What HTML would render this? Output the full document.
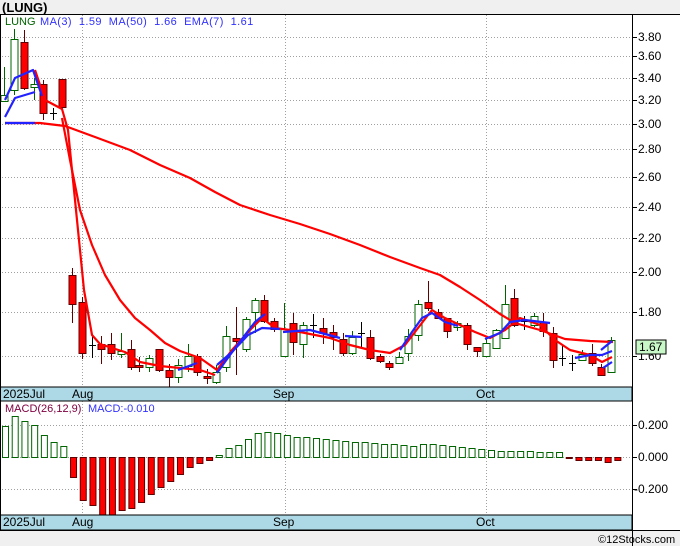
<!DOCTYPE html>
<html><head><meta charset="utf-8"><style>
body{margin:0;width:680px;height:546px;background:#f0f0f0;overflow:hidden;font-family:"Liberation Sans",sans-serif}
svg{position:absolute;left:0;top:0}
text{font-family:"Liberation Sans",sans-serif}
</style></head><body>
<svg id="s" width="680" height="546" xmlns="http://www.w3.org/2000/svg">
<rect x="0" y="0" width="680" height="546" fill="#f0f0f0"/>
<rect x="0" y="14" width="680" height="516" fill="#fff"/>
<text x="2" y="12" font-size="13" font-weight="bold" fill="#000">(LUNG)</text>
<g id="grid" stroke="#a0a0a0" stroke-dasharray="1,2" stroke-width="1"></g>
<g id="c"></g>
<g id="lines" fill="none" stroke-width="2.2" stroke-linejoin="round"></g>
<rect x="0" y="387" width="632" height="14" fill="#add8e6" stroke="#000"/>
<rect x="0" y="515" width="632" height="15" fill="#add8e6" stroke="#000"/>
<line x1="0.5" y1="14" x2="0.5" y2="530" stroke="#000"/>
<line x1="0" y1="14.5" x2="680" y2="14.5" stroke="#000"/>
<line x1="632.5" y1="14" x2="632.5" y2="546" stroke="#000"/>
<line x1="0" y1="530.5" x2="680" y2="530.5" stroke="#000"/>
<g font-size="12" fill="#000">
<text x="3" y="398">2025Jul</text><text x="72" y="398">Aug</text><text x="273" y="398">Sep</text><text x="476" y="398">Oct</text>
<text x="3" y="526">2025Jul</text><text x="72" y="526">Aug</text><text x="273" y="526">Sep</text><text x="476" y="526">Oct</text>
</g>
<text x="5" y="25" font-size="11" fill="#006400">LUNG</text>
<text x="40" y="25" font-size="11" fill="#3030ff" letter-spacing="0.4" xml:space="preserve">MA(3)  1.59  MA(50)  1.66  EMA(7)  1.61</text>
<text x="5" y="412" font-size="11" fill="#800040">MACD(26,12,9)</text>
<text x="88" y="412" font-size="11" fill="#3030ff">MACD:-0.010</text>
<g id="ax" font-size="12" fill="#000"></g>
<rect x="636" y="340" width="30" height="14" fill="#c8f7c8" stroke="#000"/>
<text x="639" y="351" font-size="12">1.67</text>
<text x="598" y="543" font-size="11" fill="#000">©12Stocks.com</text>
</svg>
<script>
var NS="http://www.w3.org/2000/svg",S=document.getElementById('s');
function el(p,t,a){var e=document.createElementNS(NS,t);for(var k in a)e.setAttribute(k,a[k]);document.getElementById(p).appendChild(e);return e}
var pr=[[37,"3.80"],[56,"3.60"],[78,"3.40"],[100,"3.20"],[124,"3.00"],[149,"2.80"],[177,"2.60"],[207,"2.40"],[238,"2.20"],[272,"2.00"],[312,"1.80"],[356,"1.60"]];
pr.forEach(function(p){el('grid','line',{x1:2,y1:p[0]+.5,x2:632,y2:p[0]+.5});el('ax','line',{x1:632,y1:p[0]+.5,x2:637,y2:p[0]+.5,stroke:'#000'});var t=el('ax','text',{x:638,y:p[0]+4});t.textContent=p[1];});
[[425,"0.200"],[457,"0.000"],[489,"-0.200"]].forEach(function(p){el('grid','line',{x1:2,y1:p[0]+.5,x2:632,y2:p[0]+.5});el('ax','line',{x1:632,y1:p[0]+.5,x2:637,y2:p[0]+.5,stroke:'#000'});var t=el('ax','text',{x:p[1][0]=='-'?634:638,y:p[0]+4});t.textContent=p[1];});
[82,285,486].forEach(function(x){el('grid','line',{x1:x+.5,y1:15,x2:x+.5,y2:387});el('grid','line',{x1:x+.5,y1:401,x2:x+.5,y2:515});});
var C=[[4,95,101,67,101,'g'],[14,39,90,29,95,'g'],[24,42,88,30,90,'r'],[34,84,87,78,100,'g'],[43,84,113,80,120,'r'],[53,113,114,108,120,'x'],[62,79,107,79,110,'r'],
[72,275,304,268,323,'r'],[82,302,353,297,359,'r'],[92,345,345,335,358,'x'],[101,344,349,336,364,'r'],[111,344,353,333,360,'r'],[121,351,354,333,358,'g'],[131,349,367,340,370,'r'],[139,365,367,357,372,'r'],[149,358,367,355,372,'g'],[159,349,370,349,372,'r'],[169,370,377,364,387,'r'],[178,365,377,359,383,'g'],[188,356,366,344,372,'g'],[197,356,372,354,376,'r'],[207,376,378,369,384,'r'],[216,372,382,365,384,'g'],[226,336,367,326,372,'g'],[236,338,341,307,375,'r'],[246,319,349,317,352,'g'],[255,300,312,298,333,'g'],[264,300,321,295,323,'r'],[274,321,329,318,332,'r'],
[284,329,356,303,356,'g'],[293,323,342,313,355,'r'],[303,325,344,322,358,'g'],[313,325,325,314,338,'x'],[323,328,333,318,344,'r'],[333,332,337,325,350,'r'],[343,339,353,333,356,'r'],[352,337,353,331,355,'g'],[361,333,333,322,347,'x'],[370,337,358,330,360,'r'],[380,356,361,354,363,'r'],[389,363,367,361,370,'r'],[399,357,363,352,364,'g'],[408,336,353,329,361,'g'],[418,304,335,300,341,'g'],[428,302,308,281,311,'r'],[438,312,318,309,319,'r'],[447,318,331,318,338,'r'],[457,323,327,321,331,'g'],[467,325,344,323,350,'r'],[477,347,351,347,357,'r'],[486,343,356,339,356,'g'],[496,330,348,329,348,'g'],[505,304,338,285,338,'g'],[514,298,325,289,327,'r'],[524,321,323,316,330,'x'],[534,316,325,313,327,'g'],[543,322,331,313,337,'r'],[553,333,360,327,368,'r'],[562,358,358,346,366,'x'],[572,363,363,355,371,'x'],[582,354,360,350,361,'g'],[592,353,363,344,366,'r'],[601,367,375,364,375,'r'],[611,340,372,337,372,'g']];
C.forEach(function(c){var col=c[5]=='g'?'#006400':c[5]=='r'?'#600000':'#000';
el('c','line',{x1:c[0]+.5,y1:c[3],x2:c[0]+.5,y2:c[4],stroke:col});
if(c[5]=='x'){el('c','line',{x1:c[0]-3,y1:c[1]+.5,x2:c[0]+4,y2:c[1]+.5,stroke:col});}
else el('c','rect',{x:c[0]-3,y:c[1]+.5,width:7,height:Math.max(1,c[2]-c[1]),fill:c[5]=='g'?'#fff':'#f00',stroke:col});});
function pl(pts,col){el('lines','polyline',{points:pts,stroke:col});}
pl("5,123 40,123 65,126 95,137 130,150 160,165 190,178 215,192 240,205 270,215 300,224 330,234 360,245 390,257 420,268 440,275 460,287 480,300 500,314 515,323 540,330 565,339 590,341 613,342","#f00");
pl("5,123 35,123","#22f");
pl("35,70 45,100 62,109 68,130 75,200 84,290 92,335 100,344 112,348 125,352 140,362 160,366 180,368 200,370 215,375","#f00");
pl("62,118 70,160 80,210 92,245 105,275 120,300 135,318 150,330 165,343 180,351 200,358 217,370 232,350 250,330 262,318 275,328 290,330 310,334 330,338 350,345 370,350 390,353 405,345 418,328 432,310 445,318 460,325 475,332 490,338 505,330 520,318 540,325 555,340 570,350 590,355 602,362 612,357","#f00");
pl("5,100 15,78 33,70 42,96","#22f");
pl("5,117 15,98 35,92","#22f");
pl("178,370 197,363","#22f");
pl("217,373 230,355 245,335 255,322 265,314","#22f");
pl("217,365 232,352 248,335 262,328 280,329","#22f");
pl("283,332 310,330 340,338","#22f");
pl("345,336 362,337","#22f");
pl("400,350 412,332 422,318 432,313 445,322 458,326","#22f");
pl("485,339 500,333 510,322 525,320 550,323","#22f");
pl("575,358 590,355 602,355 612,351","#22f");
pl("603,368 612,362","#22f");
pl("601,350 612,341","#22f");
var H=[426,416,421,425,435,442,446,477,500,505,515,515,510,508,502,494,487,481,474,467,463,460,455,448,445,439,433,432,433,435,437,437,438,439,440,441,442,442,443,444,444,445,446,444,444,445,446,447,448,449,450,451,451,451,451,452,452,452,457,460,460,460,462,460];
H.forEach(function(h,i){var x=2+i*9.72;var pos=h<457;
var y=pos?h:457,hh=Math.max(1,Math.abs(h-457));if(h>=515){hh=515-457}
el('c','rect',{x:x+.5,y:y+.5,width:6,height:hh,fill:pos?'#fff':'#f00',stroke:pos?'#006400':'#600000'});});
</script>
</body></html>
